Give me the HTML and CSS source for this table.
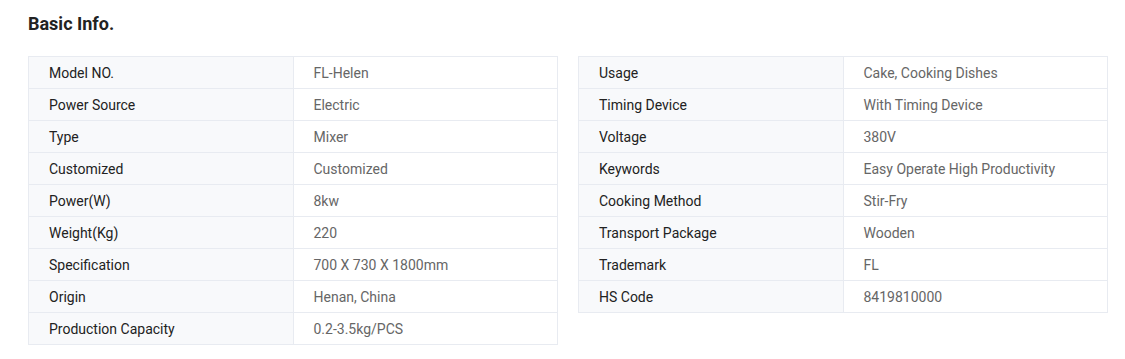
FILE: index.html
```html
<!DOCTYPE html>
<html>
<head>
<meta charset="utf-8">
<link rel="stylesheet" href="styles.css">
</head>
<body>
<div class="basic-info">
  <h2 class="title">Basic Info.</h2>
  <div class="tables">
    <table class="info">
      <tr><td class="label">Model NO.</td><td class="value">FL-Helen</td></tr>
      <tr><td class="label">Power Source</td><td class="value">Electric</td></tr>
      <tr><td class="label">Type</td><td class="value">Mixer</td></tr>
      <tr><td class="label">Customized</td><td class="value">Customized</td></tr>
      <tr><td class="label">Power(W)</td><td class="value">8kw</td></tr>
      <tr><td class="label">Weight(Kg)</td><td class="value">220</td></tr>
      <tr><td class="label">Specification</td><td class="value">700 X 730 X 1800mm</td></tr>
      <tr><td class="label">Origin</td><td class="value">Henan, China</td></tr>
      <tr><td class="label">Production Capacity</td><td class="value">0.2-3.5kg/PCS</td></tr>
    </table>
    <table class="info">
      <tr><td class="label">Usage</td><td class="value">Cake, Cooking Dishes</td></tr>
      <tr><td class="label">Timing Device</td><td class="value">With Timing Device</td></tr>
      <tr><td class="label">Voltage</td><td class="value">380V</td></tr>
      <tr><td class="label">Keywords</td><td class="value">Easy Operate High Productivity</td></tr>
      <tr><td class="label">Cooking Method</td><td class="value">Stir-Fry</td></tr>
      <tr><td class="label">Transport Package</td><td class="value">Wooden</td></tr>
      <tr><td class="label">Trademark</td><td class="value">FL</td></tr>
      <tr><td class="label">HS Code</td><td class="value">8419810000</td></tr>
    </table>
  </div>
</div>
</body>
</html>
```
FILE: styles.css
```css
* { box-sizing: border-box; }
html, body { margin: 0; padding: 0; background: #fff; }
body { font-family: Roboto, "Liberation Sans", sans-serif; }
.basic-info { padding: 12px 0 0 28px; }
.title {
  margin: 0 0 20px 0;
  font-size: 18px;
  font-weight: 700;
  color: #222;
  line-height: 24px;
}
.tables {
  display: flex;
  align-items: flex-start;
  gap: 20px;
}
.info {
  flex: 0 0 530px;
  width: 530px;
  border-collapse: collapse;
  table-layout: fixed;
  font-size: 14px;
}
.info td {
  border: 1px solid #e8ebf1;
  height: 32px;
  padding: 0 0 0 20px;
  line-height: 16px;
  vertical-align: middle;
}
.info .label { width: 50%; background: #f8f9fb; color: #222; }
.info .value { color: #666; background: #fff; }
```
